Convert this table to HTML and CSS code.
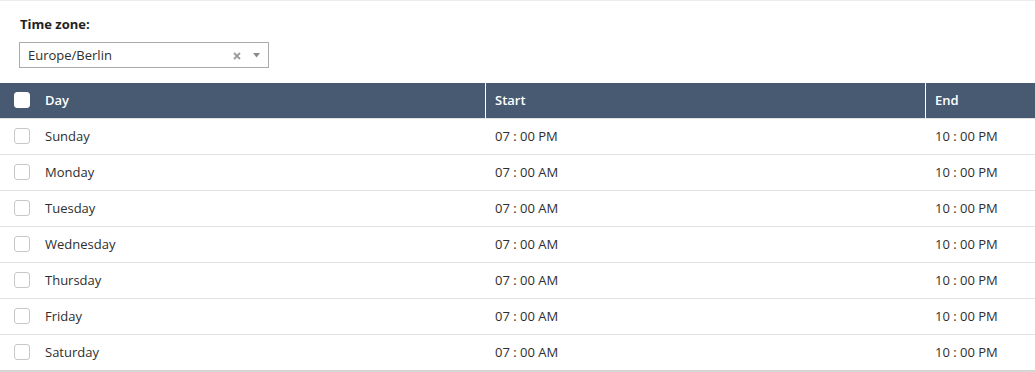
FILE: index.html
```html
<!DOCTYPE html>
<html lang="en">
<head>
<meta charset="utf-8">
<title>Schedule</title>
<link rel="stylesheet" href="styles.css">
</head>
<body>
<div class="page">
  <div class="tz">
    <label class="tz-label">Time zone:</label>
    <div class="select">
      <span class="select-value">Europe/Berlin</span>
      <span class="select-icons">
        <svg class="clear" width="8" height="8" viewBox="0 0 8 8"><path d="M1 1 L7 7 M7 1 L1 7" stroke="#9a9a9a" stroke-width="1.8"/></svg>
        <svg class="caret" width="7" height="5" viewBox="0 0 7 5"><path d="M0 0 H7 L3.5 4.5 Z" fill="#8a8a8a"/></svg>
      </span>
    </div>
  </div>
  <div class="table">
    <div class="row head">
      <div class="cell day"><span class="cb cb-head"></span>Day</div>
      <div class="cell col">Start</div>
      <div class="cell col">End</div>
    </div>
    <div class="row"><div class="cell day"><span class="cb"></span>Sunday</div><div class="cell col">07 : 00 PM</div><div class="cell col">10 : 00 PM</div></div>
    <div class="row"><div class="cell day"><span class="cb"></span>Monday</div><div class="cell col">07 : 00 AM</div><div class="cell col">10 : 00 PM</div></div>
    <div class="row"><div class="cell day"><span class="cb"></span>Tuesday</div><div class="cell col">07 : 00 AM</div><div class="cell col">10 : 00 PM</div></div>
    <div class="row"><div class="cell day"><span class="cb"></span>Wednesday</div><div class="cell col">07 : 00 AM</div><div class="cell col">10 : 00 PM</div></div>
    <div class="row"><div class="cell day"><span class="cb"></span>Thursday</div><div class="cell col">07 : 00 AM</div><div class="cell col">10 : 00 PM</div></div>
    <div class="row"><div class="cell day"><span class="cb"></span>Friday</div><div class="cell col">07 : 00 AM</div><div class="cell col">10 : 00 PM</div></div>
    <div class="row last"><div class="cell day"><span class="cb"></span>Saturday</div><div class="cell col">07 : 00 AM</div><div class="cell col">10 : 00 PM</div></div>
  </div>
</div>
</body>
</html>
```
FILE: styles.css
```css
* { box-sizing: border-box; }
html, body { margin: 0; padding: 0; background: #fff; }
body {
  font-family: "Open Sans", "Liberation Sans", sans-serif;
  font-size: 13px;
  color: #2e2e2e;
}
.page {
  border-top: 1px solid #ececec;
}
.tz {
  padding: 14px 0 0 19px;
  display: flex;
  flex-direction: column;
}
.tz-label {
  font-weight: 700;
  line-height: 18px;
  color: #222;
  margin-left: 1px;
}
.select {
  margin-top: 9px;
  width: 250px;
  height: 26px;
  border: 1px solid #aaa;
  display: flex;
  align-items: center;
  justify-content: space-between;
  padding: 0 8px 0 8px;
}
.select-value { line-height: 24px; }
.select-icons {
  display: flex;
  align-items: center;
  gap: 12px;
  margin-top: 2px;
}
.select-icons .caret { margin-top: -2px; }
.table {
  margin-top: 15px;
  border-bottom: 2px solid #d5d5d5;
}
.row {
  display: grid;
  grid-template-columns: 485px 440px 1fr;
  height: 36px;
  border-top: 1px solid #e2e2e2;
}
.row.head {
  background: #475a71;
  color: #fff;
  font-weight: 600;
  border-top: none;
  height: 35px;
}
.cell {
  display: flex;
  align-items: center;
  white-space: nowrap;
  padding-bottom: 2px;
}
.head .cell { padding-bottom: 2px; }
.day { padding-left: 14px; }
.col { padding-left: 10px; }
.head .col { border-left: 1px solid #fff; padding-left: 9px; }
.cb {
  width: 16px;
  height: 16px;
  border: 1px solid #c8c8c8;
  border-radius: 3px;
  background: #fff;
  margin-right: 15px;
  flex: none;
}
.cb-head {
  border-color: #fff;
  border-radius: 3px;
}
```
